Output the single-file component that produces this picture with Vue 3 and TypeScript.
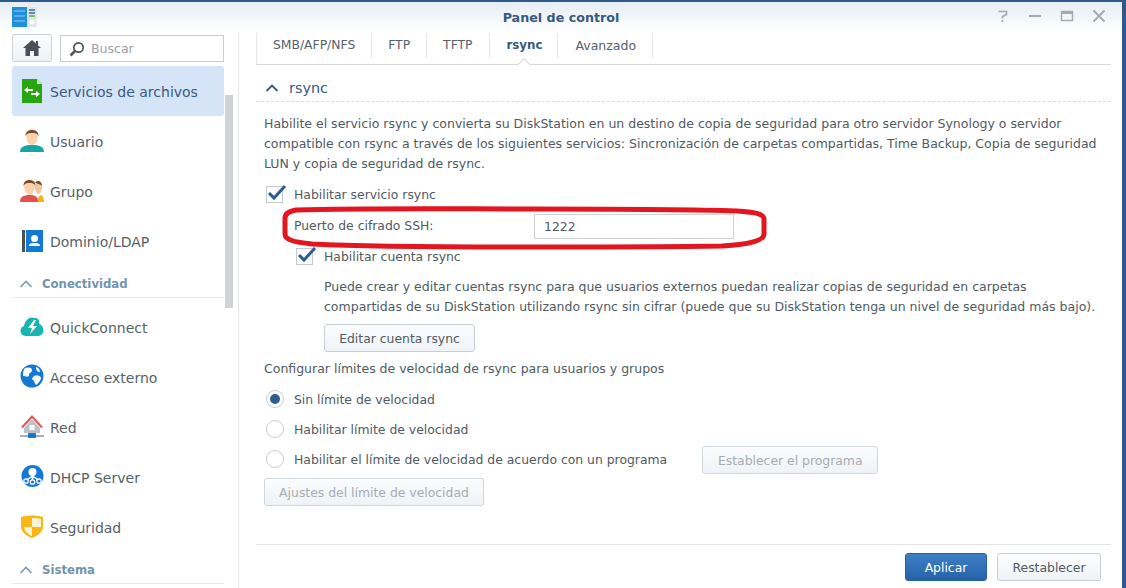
<script setup lang="ts">
interface NavItem { label: string; icon: string; active?: boolean }
const tabs = ['SMB/AFP/NFS', 'FTP', 'TFTP', 'rsync', 'Avanzado']
const files: NavItem[] = [
  { label: 'Servicios de archivos', active: true, icon: '<path d="M2 1h15l5 5v19H2z" fill="#2aa512"/><path d="M17 1l5 5h-5z" fill="#c8e8c0"/><path d="M4 12l4-3v2h5v2H8v2zM20 16l-4-3v2h-5v2h5v2z" fill="#fff"/>' },
  { label: 'Usuario', icon: '<path d="M0 24c0-5 4-6 8-7h8c4 1 8 2 8 7z" fill="#17a5a5"/><path d="M6 7c0-8 12-8 12 0 0 6-3 10-6 10S6 13 6 7z" fill="#f8d3ae"/><path d="M5.500 8C5 0 19 0 18.500 8 17 5 15 5 12 5S7 5 5.500 8z" fill="#7a4a2c"/>' },
  { label: 'Grupo', icon: '<path d="M15 9c0-5 7-5 7 0 0 4-2 7-3.500 7S15 13 15 9z" fill="#f0c8a0"/><path d="M15 5c1-3 7-3 7 3-2-2-4-2-7-3z" fill="#7a4a2c"/><path d="M17 24c0-4 2-6 4-7 2 1 3 3 3 7z" fill="#f5b21d"/><path d="M0 24c0-5 3-6 7-7h5c4 1 6 2 6 7z" fill="#e2504f"/><path d="M4 7c0-7 11-7 11 0 0 6-3 10-5.500 10S4 13 4 7z" fill="#f8d3ae"/><path d="M3.500 8C3 0 16 0 15.500 8 14 5 12 5 9.500 5S5 5 3.500 8z" fill="#7a4a2c"/>' },
  { label: 'Dominio/LDAP', icon: '<rect x="2" y="2" width="3" height="22" fill="#4a5058"/><rect x="6" y="2" width="17" height="22" fill="#1279d4"/><circle cx="14.500" cy="10.500" r="3.500" fill="#fff"/><path d="M9 18c0-3 3-3 5.500-3s5.500 0 5.500 3z" fill="#fff"/>' },
]
const conn: NavItem[] = [
  { label: 'QuickConnect', icon: '<path d="M6 22C-1 22-1 13 4 12 5 5 11 2 14 4c4-1 6 3 5 6 6 1 6 12-1 12z" fill="#18b4b0"/><path d="M14 6l-6 8h4l-2 6 7-8h-4l3-6z" fill="#fff"/>' },
  { label: 'Acceso externo', icon: '<circle cx="12" cy="12" r="11.500" fill="#1279d4"/><path d="M5 4c3-1 7-1 7 2s-3 2-3 5-4 1-6 1c0-3 0-6 2-8zM14 12c3-2 7 0 7 2s-3 6-5 7c-2-2-1-4-3-5s0-3 1-4zM16 3c2 0 4 3 4 5-2 0-4-1-4-5z" fill="#fff"/>' },
  { label: 'Red', icon: '<path d="M12 1L1 13l2 1 9-10 9 10 2-1z" fill="#e0555a"/><path d="M4 14l8-9 8 9v5H4z" fill="#bcc2c9"/><rect x="9.500" y="11" width="5" height="5" fill="#fff"/><rect x="0" y="21" width="24" height="2" fill="#a8aeb5"/><rect x="8" y="19" width="8" height="5" rx="1" fill="#1279d4"/>' },
  { label: 'DHCP Server', icon: '<circle cx="12.500" cy="12" r="11" fill="#1279d4"/><circle cx="12.500" cy="8" r="4" fill="#fff"/><path d="M12.500 11v5M12.500 12l-6 4M12.500 12l6 4" stroke="#fff" stroke-width="1.500"/><circle cx="6" cy="17" r="2.200" fill="none" stroke="#fff" stroke-width="1.300"/><circle cx="12.500" cy="18" r="2.200" fill="none" stroke="#fff" stroke-width="1.300"/><circle cx="19" cy="17" r="2.200" fill="none" stroke="#fff" stroke-width="1.300"/>' },
  { label: 'Seguridad', icon: '<path d="M1 3c7-2 15-2 22 0v10c0 5-6 9-11 11C7 22 1 18 1 13z" fill="#f9b716"/><path d="M12 4c3 0 6 0 9 1v8h-9zM12 13v9c-3-1-8-5-8-9z" fill="#fdf4d8"/>' },
]
</script>

<template>
  <div class="window">
    <header class="titlebar">
      <svg class="logo" width="25" height="20" viewBox="0 0 25 20">
        <rect width="15" height="20" fill="#1f8fdc" />
        <path d="M2 4h11M2 9h11M2 14h11" stroke="#8ccdf2" stroke-width="1" />
        <rect x="15" width="9.500" height="20" fill="#dfe4e8" />
        <path d="M17 3h6M17 6h6" stroke="#3a6a9a" stroke-width="1.500" />
        <path d="M17 9h6" stroke="#5ab04a" stroke-width="1.500" />
        <circle cx="20" cy="15" r="2.500" fill="#fff" />
      </svg>
      <span class="title">Panel de control</span>
      <div class="controls">
        <svg width="14" height="14" viewBox="0 0 14 14" fill="none" stroke="#a3a9af" stroke-width="1.600">
          <path d="M2.500 2.500h8l0 3-4 2v2" />
          <path d="M6.500 11v2" />
        </svg>
        <svg width="14" height="14" viewBox="0 0 14 14"><rect x="1" y="6" width="12" height="2" fill="#a3a9af" /></svg>
        <svg width="14" height="14" viewBox="0 0 14 14" fill="none"><rect x="1.500" y="2.500" width="11" height="9" stroke="#a3a9af" stroke-width="1.400" /><rect x="1" y="2" width="12" height="3" fill="#a3a9af" /></svg>
        <svg width="14" height="14" viewBox="0 0 14 14" stroke="#a3a9af" stroke-width="1.800"><path d="M1.500 1.500l11 11M12.500 1.500l-11 11" /></svg>
      </div>
    </header>

    <div class="body">
      <aside class="sidebar">
        <div class="search-row">
          <button class="home">
            <svg width="18" height="16" viewBox="0 0 18 16">
              <path d="M9 0L0 8h2.500v8h4.500v-5h4v5h4.500V8H18l-3-2.700V1h-2v2.500z" fill="#4a5058" />
            </svg>
          </button>
          <div class="search">
            <svg width="16" height="16" viewBox="0 0 16 16" fill="none" stroke="#50565c">
              <circle cx="9.500" cy="6.500" r="4.700" stroke-width="1.700" />
              <path d="M6 10l-4.500 4.500" stroke-width="2.600" />
            </svg>
            <span>Buscar</span>
          </div>
        </div>

        <nav class="nav">
          <a v-for="item in files" :key="item.label" class="nav-item" :class="{ active: item.active }">
            <svg width="24" height="26" viewBox="0 0 24 26" v-html="item.icon"></svg>
            <span>{{ item.label }}</span>
          </a>
          <div class="section">
            <svg width="14" height="8" viewBox="0 0 14 8" fill="none" stroke="#7a9ab5" stroke-width="1.600"><path d="M1.500 7l5.500-5.500L12.500 7" /></svg>
            <span>Conectividad</span>
          </div>
          <div class="group">
            <a v-for="item in conn" :key="item.label" class="nav-item">
              <svg width="24" height="26" viewBox="0 0 24 26" v-html="item.icon"></svg>
              <span>{{ item.label }}</span>
            </a>
          </div>
          <div class="section">
            <svg width="14" height="8" viewBox="0 0 14 8" fill="none" stroke="#7a9ab5" stroke-width="1.600"><path d="M1.500 7l5.500-5.500L12.500 7" /></svg>
            <span>Sistema</span>
          </div>
        </nav>
        <div class="scrollbar"></div>
      </aside>

      <main class="main">
        <div class="tabs">
          <div v-for="t in tabs" :key="t" class="tab" :class="{ on: t === 'rsync' }">{{ t }}</div>
          <i class="notch"></i>
        </div>

        <div class="content">
          <div class="panel-head">
            <svg width="14" height="8" viewBox="0 0 14 8" fill="none" stroke="#33587f" stroke-width="1.800"><path d="M1.500 7l5.500-5.500L12.500 7" /></svg>
            <span>rsync</span>
          </div>

          <p class="intro">Habilite el servicio rsync y convierta su DiskStation en un destino de copia de seguridad para otro servidor Synology o servidor compatible con rsync a través de los siguientes servicios: Sincronización de carpetas compartidas, Time Backup, Copia de seguridad LUN y copia de seguridad de rsync.</p>

          <label class="check first"><i class="box"><svg width="20" height="17" viewBox="0 0 20 17"><path d="M2 9l5 5L18 2" fill="none" stroke="#2b5d91" stroke-width="3" /></svg></i>Habilitar servicio rsync</label>

          <div class="ssh">
            <span class="ssh-label">Puerto de cifrado SSH:</span>
            <div class="input">1222</div>
          </div>

          <div class="indent">
            <label class="check"><i class="box"><svg width="20" height="17" viewBox="0 0 20 17"><path d="M2 9l5 5L18 2" fill="none" stroke="#2b5d91" stroke-width="3" /></svg></i>Habilitar cuenta rsync</label>
            <p class="desc">Puede crear y editar cuentas rsync para que usuarios externos puedan realizar copias de seguridad en carpetas compartidas de su DiskStation utilizando rsync sin cifrar (puede que su DiskStation tenga un nivel de seguridad más bajo).</p>
            <button class="btn edit">Editar cuenta rsync</button>
          </div>

          <p class="limits">Configurar límites de velocidad de rsync para usuarios y grupos</p>

          <div class="radio"><i class="dot on"></i>Sin límite de velocidad</div>
          <div class="radio"><i class="dot"></i>Habilitar límite de velocidad</div>
          <div class="radio"><i class="dot"></i>Habilitar el límite de velocidad de acuerdo con un programa<button class="btn off sched">Establecer el programa</button></div>
          <button class="btn off adjust">Ajustes del límite de velocidad</button>
        </div>

        <footer class="footer">
          <button class="btn primary">Aplicar</button>
          <button class="btn reset">Restablecer</button>
        </footer>

        <svg class="annotation" width="488" height="44" viewBox="0 0 488 44" fill="none">
          <path d="M3 12C3 7 8 5 14 4 90 2 170 3 250 3 330 3 400 3 455 5 472 6 482 8 482 13L482 28C482 34 470 38 440 40 380 41 320 41 250 41 170 41 90 41 30 38 12 36 3 34 3 28Z" stroke="#e3161f" stroke-width="5" />
        </svg>
      </main>
    </div>
  </div>
</template>

<style>
html, body { margin: 0; background: #fff; overflow: hidden; }
</style>

<style scoped>
.window {
  width: 1126px;
  height: 588px;
  box-sizing: border-box;
  border-top: 2px solid #2d5a88;
  border-right: 4px solid #2d5a88;
  background: #fff;
  display: flex;
  flex-direction: column;
  overflow: hidden;
  font-family: "DejaVu Sans", sans-serif;
  font-size: 12.400px;
  color: #4f5a62;
}
.titlebar {
  height: 30px;
  flex: none;
  display: flex;
  align-items: center;
  justify-content: center;
  position: relative;
  background: linear-gradient(#e6edf3, #fff);
}
.logo { position: absolute; left: 12px; top: 5px; }
.title { font-size: 12.700px; font-weight: 700; color: #36597f; }
.controls {
  position: absolute;
  right: 16px;
  top: 7px;
  display: flex;
  gap: 18px;
}
.body { flex: 1; display: flex; min-height: 0; }
.sidebar {
  width: 239px;
  flex: none;
  box-sizing: border-box;
  padding: 2px 14px 0 12px;
  border-right: 1px solid #e4e6e8;
  position: relative;
}
.search-row { display: flex; gap: 8px; height: 28px; }
.home {
  width: 40px;
  height: 28px;
  padding: 0;
  box-sizing: border-box;
  border: 1px solid #cbd1d6;
  border-radius: 3px;
  background: linear-gradient(#fbfcfd, #eef2f6);
  display: flex;
  align-items: center;
  justify-content: center;
}
.search {
  flex: 1;
  height: 27px;
  margin-top: 1px;
  box-sizing: border-box;
  border: 1px solid #c8cccf;
  display: flex;
  align-items: center;
  gap: 6px;
  padding-left: 8px;
  color: #9aa1a8;
  font-size: 12.500px;
}
.nav { margin-top: 4px; }
.nav-item {
  height: 50px;
  display: flex;
  align-items: center;
  gap: 6px;
  padding-left: 8px;
  border-radius: 3px;
  font-size: 14px;
  color: #565f67;
}
.nav-item span { padding-top: 2px; }
.nav-item.active { background: #d5e5f7; color: #3a5a80; }
.section {
  height: 32px;
  box-sizing: border-box;
  border-bottom: 1px solid #e8eaec;
  display: flex;
  align-items: center;
  gap: 9px;
  padding: 4px 0 0 7px;
  font-size: 11.700px;
  font-weight: 700;
  color: #7393ae;
}
.group { margin-top: 4px; }
.scrollbar {
  position: absolute;
  left: 225px;
  top: 63px;
  width: 8px;
  height: 213px;
  background: #d0d3d6;
}
.main {
  flex: 1;
  min-width: 0;
  position: relative;
  display: flex;
  flex-direction: column;
  padding: 0 11px 0 17px;
}
.tabs {
  height: 32px;
  margin-top: 1px;
  flex: none;
  box-sizing: border-box;
  border-bottom: 1px solid #d6d9dc;
  border-left: 1px solid #e3e5e7;
  display: flex;
  position: relative;
}
.tab {
  height: 25px;
  padding: 0 16px;
  line-height: 25px;
  border-right: 1px solid #e3e5e7;
  color: #56606a;
  font-size: 12.350px;
}
.tab:last-of-type { padding-left: 17px; font-size: 12.500px; }
.tab.on { padding: 0 15px 0 17px; font-weight: 700; font-size: 11.800px; color: #36597f; }
.notch {
  position: absolute;
  left: 262px;
  bottom: -1px;
  width: 9px;
  height: 9px;
  background: #fff;
  border-left: 1px solid #d6d9dc;
  border-top: 1px solid #d6d9dc;
  transform: translateY(5px) rotate(45deg);
}
.content { flex: 1; padding-left: 8px; min-height: 0; }
.panel-head {
  height: 37px;
  margin-left: -8px;
  padding: 9px 0 0 9px;
  box-sizing: border-box;
  border-bottom: 1px dashed #d8dadd;
  display: flex;
  align-items: center;
  gap: 10px;
  font-size: 14.400px;
  color: #36597f;
}
p { margin: 0; font-size: 12.500px; }
.intro { margin-top: 12px; line-height: 20px; width: 838px; }
.check { display: flex; align-items: center; height: 20px; }
.first { margin-top: 10px; }
.box {
  width: 15px;
  height: 15px;
  margin: 0 11px 0 2px;
  border: 1px solid #c3cad0;
  position: relative;
  flex: none;
}
.box svg { position: absolute; left: 0; top: -3px; }
.ssh {
  height: 25px;
  margin-top: 10px;
  display: flex;
  align-items: center;
  padding-left: 30px;
}
.ssh-label { width: 240px; margin-top: -2px; }
.input {
  width: 200px;
  height: 25px;
  box-sizing: border-box;
  border: 1px solid #cfd3d6;
  line-height: 24px;
  padding-left: 9px;
}
.indent { padding-left: 30px; margin-top: 7px; }
.desc { margin: 11px 0 0 30px; line-height: 20px; width: 780px; }
.btn {
  box-sizing: border-box;
  height: 28px;
  padding: 0;
  border: 1px solid #c6ced6;
  border-radius: 3px;
  background: linear-gradient(#fbfcfd, #eff3f7);
  color: #505a62;
  font: 12.400px "DejaVu Sans", sans-serif;
}
.edit { width: 151px; margin: 7px 0 0 30px; display: block; }
.limits { margin-top: 7px; line-height: 20px; }
.radio { height: 30px; display: flex; align-items: center; }
.limits + .radio { margin-top: 5px; }
.dot {
  width: 16px;
  height: 16px;
  margin: 0 10px 0 2px;
  border: 1px solid #c6ccd1;
  border-radius: 50%;
  position: relative;
  background: #fff;
  flex: none;
}
.dot.on::after {
  content: "";
  position: absolute;
  inset: 3px;
  border-radius: 50%;
  background: #2b5d91;
}
.off { color: #a6adb4; border-color: #d0d7dd; }
.sched { width: 176px; margin: 2px 0 0 35px; }
.adjust { width: 220px; display: block; margin-top: 4px; }
.footer {
  flex: none;
  height: 44px;
  box-sizing: border-box;
  border-top: 1px solid #e2e4e6;
  display: flex;
  justify-content: flex-end;
  align-items: flex-start;
  gap: 10px;
  padding: 8px 10px 0 0;
}
.primary {
  width: 82px;
  border-color: #2a5f9e;
  background: linear-gradient(#3d80c8, #2762a8);
  color: #fff;
}
.reset { width: 104px; }
.annotation {
  position: absolute;
  left: 43px;
  top: 174px;
}
</style>
